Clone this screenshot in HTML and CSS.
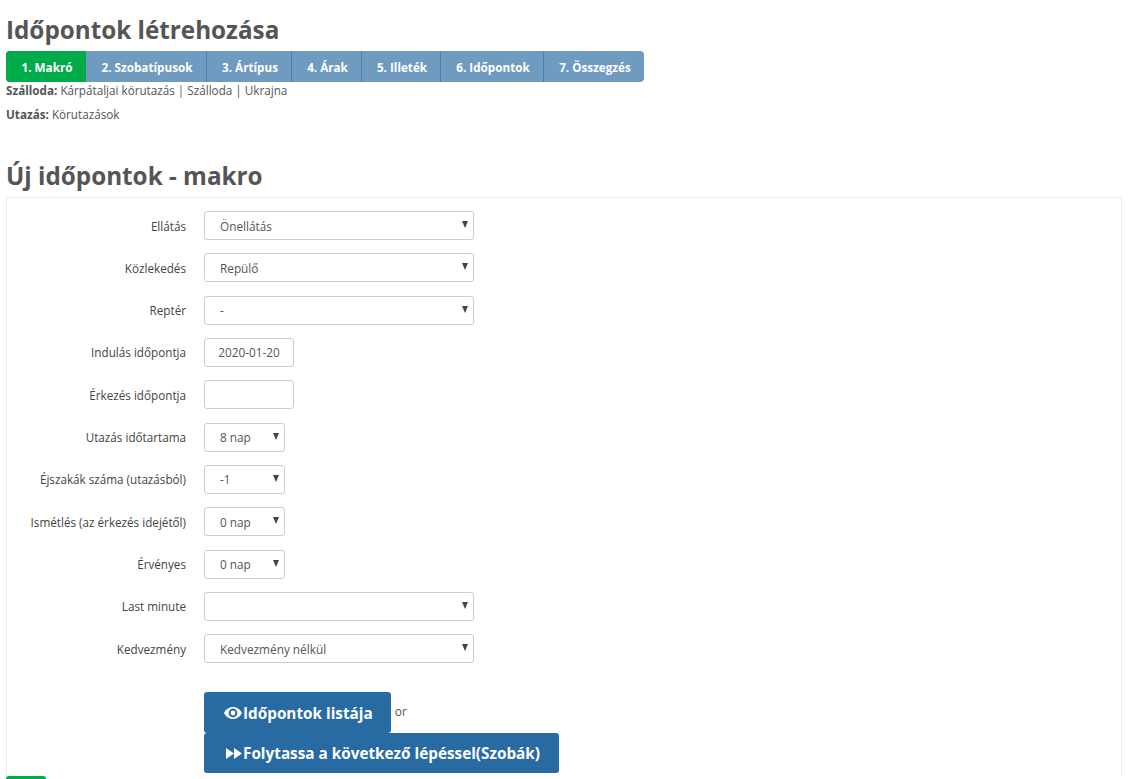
FILE: index.html
```html
<!DOCTYPE html>
<html lang="hu">
<head>
<meta charset="utf-8">
<title>Időpontok létrehozása</title>
<link rel="stylesheet" href="styles.css">
</head>
<body>
<h1 class="title">Időpontok létrehozása</h1>
<nav class="steps">
  <a class="step step-active s1">1. Makró</a>
  <a class="step s2">2. Szobatípusok</a>
  <a class="step s3">3. Ártípus</a>
  <a class="step s4">4. Árak</a>
  <a class="step s5">5. Illeték</a>
  <a class="step s6">6. Időpontok</a>
  <a class="step s7">7. Összegzés</a>
</nav>
<p class="info"><b>Szálloda:</b> Kárpátaljai körutazás | Szálloda | Ukrajna</p>
<p class="info"><b>Utazás:</b> Körutazások</p>
<h1 class="title title-second">Új időpontok - makro</h1>
<form class="panel">
  <div class="row"><label>Ellátás</label><span class="pick wide"><select><option>Önellátás</option></select></span></div>
  <div class="row"><label>Közlekedés</label><span class="pick wide"><select><option>Repülő</option></select></span></div>
  <div class="row"><label>Reptér</label><span class="pick wide"><select><option>-</option></select></span></div>
  <div class="row"><label>Indulás időpontja</label><input class="date" type="text" value="2020-01-20"></div>
  <div class="row"><label>Érkezés időpontja</label><input class="date" type="text"></div>
  <div class="row"><label>Utazás időtartama</label><span class="pick small"><select><option>8 nap</option></select></span></div>
  <div class="row"><label>Éjszakák száma (utazásból)</label><span class="pick small"><select><option>-1</option></select></span></div>
  <div class="row"><label>Ismétlés (az érkezés idejétől)</label><span class="pick small"><select><option>0 nap</option></select></span></div>
  <div class="row"><label>Érvényes</label><span class="pick small"><select><option>0 nap</option></select></span></div>
  <div class="row"><label>Last minute</label><span class="pick wide"><select><option></option></select></span></div>
  <div class="row"><label>Kedvezmény</label><span class="pick wide"><select><option>Kedvezmény nélkül</option></select></span></div>
  <div class="actions">
    <div class="action-line">
      <button type="button" class="btn btn-eye"><svg viewBox="0 0 18 12" width="18" height="12"><path fill="#fff" fill-rule="evenodd" d="M9 0C5 0 1.800 2.400 0 6c1.800 3.600 5 6 9 6s7.200-2.400 9-6C16.200 2.400 13 0 9 0zM9 1.600a4.400 4.400 0 1 1 0 8.800 4.400 4.400 0 0 1 0-8.800zM9 3.600a2.400 2.400 0 1 0 0 4.800 2.400 2.400 0 0 0 0-4.800z"/></svg>Időpontok listája</button>
      <span class="or">or</span>
    </div>
    <button type="button" class="btn btn-next"><svg viewBox="0 0 16 11" width="16" height="11"><path fill="#fff" d="M0 0l8 5.500-8 5.500zM8 0l8 5.500-8 5.500z"/></svg>Folytassa a következő lépéssel(Szobák)</button>
  </div>
</form>
<div class="green-btn"></div>
</body>
</html>
```
FILE: styles.css
```css
html {
  height: 779px;
  overflow: hidden;
}
body {
  margin: 0;
  padding: 0 23px 0 6px;
  font-family: "Open Sans", sans-serif;
  font-size: 11.7px;
  color: #555;
  background: #fff;
}
.title {
  margin: 0;
  font-size: 24.25px;
  line-height: 33px;
  font-weight: 700;
  color: #555;
  padding-top: 13px;
  height: 51px;
  box-sizing: border-box;
}
.title-second {
  margin-top: 37px;
  height: 38px;
  padding-top: 0;
}
.steps {
  display: flex;
  width: 638px;
  height: 31px;
  background: #6f9bc1;
  border-radius: 4px;
  overflow: hidden;
}
.step {
  display: flex;
  align-items: center;
  justify-content: center;
  box-sizing: border-box;
  padding-left: 2px;
  color: #fff;
  font-weight: 700;
  font-size: 11.7px;
  border-left: 1px solid #4a7eab;
}
.step-active {
  background: #00ac4a;
  border-left: 0;
}
.s1 { width: 80px; }
.s2 { width: 120px; border-left: 0; }
.s3 { width: 85px; }
.s4 { width: 70px; }
.s5 { width: 79px; }
.s6 { width: 103px; }
.s7 { width: 101px; }
.info {
  margin: 0 0 8px;
  line-height: 16px;
  color: #555;
}
.info b { font-weight: 700; }
.panel {
  border: 1px solid #eee;
  border-bottom: 0;
  border-radius: 4px 4px 0 0;
  padding: 13px 0 0;
}
.row {
  display: flex;
  align-items: center;
  margin-bottom: 13.33px;
  height: 29px;
}
.row label {
  width: 179px;
  margin-right: 18px;
  text-align: right;
  color: #444;
}
.pick {
  position: relative;
  display: block;
}
.pick::after {
  content: "";
  position: absolute;
  top: 10px;
  right: 6px;
  border-left: 3.5px solid transparent;
  border-right: 3.5px solid transparent;
  border-top: 7px solid #444;
  pointer-events: none;
}
select, .date {
  box-sizing: border-box;
  height: 29px;
  border: 1px solid #ccc;
  border-radius: 3px;
  background: #fff;
  font-family: "Open Sans", sans-serif;
  font-size: 11.8px;
  color: #555;
}
select {
  display: block;
  width: 100%;
  appearance: none;
  padding: 0 0 0 15px;
}
.wide { width: 270px; }
.small { width: 81px; }
.date {
  width: 90px;
  text-align: center;
  padding: 0;
}
.actions {
  margin-left: 197px;
  margin-top: 29px;
  padding-bottom: 3px;
}
.action-line {
  display: flex;
  align-items: flex-start;
}
.btn {
  display: inline-flex;
  align-items: center;
  gap: 1px;
  border: 0;
  border-radius: 3px;
  background: #286ba3;
  color: #fff;
  font-family: "Open Sans", sans-serif;
  font-size: 15.3px;
  font-weight: 700;
  white-space: nowrap;
}
.btn-eye {
  height: 41px;
  padding: 0 18px 0 20px;
}
.btn-next {
  display: flex;
  height: 40px;
  padding: 0 19px 0 22px;
}
.or {
  margin: 11px 0 0 4px;
  font-size: 12px;
}
.green-btn {
  width: 40px;
  height: 30px;
  background: #00ac4a;
  border-radius: 3px;
}
```
